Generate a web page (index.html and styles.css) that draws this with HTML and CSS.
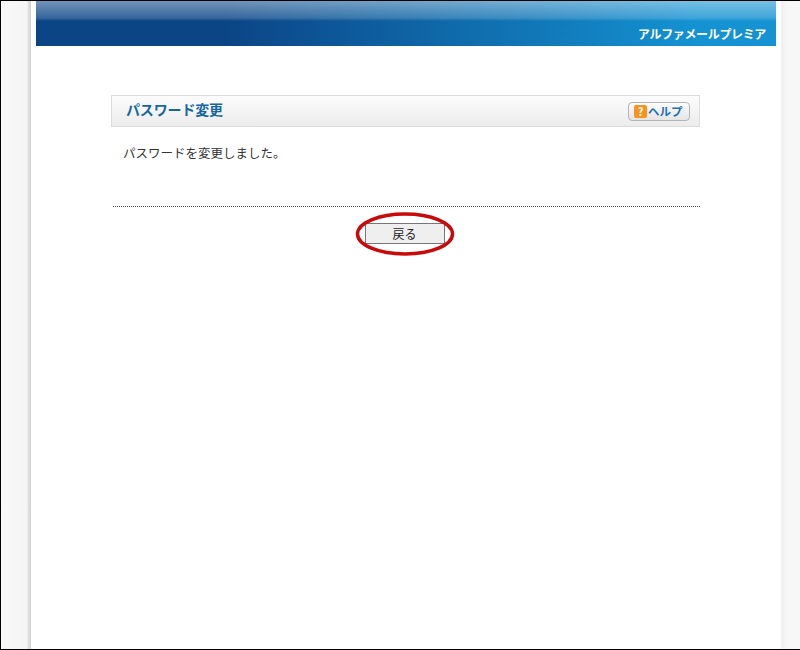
FILE: index.html
```html
<!DOCTYPE html>
<html lang="ja">
<head>
<meta charset="utf-8">
<title>パスワード変更</title>
<link rel="stylesheet" href="styles.css">
</head>
<body>
<div class="frame">
  <div class="gutter gutter-left"></div>
  <main class="page">
    <header class="banner">
      <span class="brand">アルファメールプレミア</span>
    </header>
    <section class="panel">
      <div class="title-bar">
        <h1 class="title">パスワード変更</h1>
        <a class="help">
          <svg class="help-icon" width="13" height="13" viewBox="0 0 13 13"><rect width="13" height="13" rx="2" fill="#f7931e"/></svg>
          <span class="help-q">?</span><span class="help-text">ヘルプ</span>
        </a>
      </div>
      <p class="message">パスワードを変更しました。</p>
      <div class="actions">
        <div class="button-wrap">
          <button class="back" type="button">戻る</button>
          <svg class="ring" width="100" height="44" viewBox="0 0 100 44"><ellipse cx="50" cy="22" rx="47.5" ry="20" fill="none" stroke="#c80a0a" stroke-width="3.5"/></svg>
        </div>
      </div>
    </section>
  </main>
  <div class="gutter gutter-right"></div>
</div>
</body>
</html>
```

FILE: styles.css
```css
* { box-sizing: border-box; }
html, body { margin: 0; padding: 0; background: #fff; }
body { font-family: "Noto Sans CJK JP", "Liberation Sans", sans-serif; overflow: hidden; }
.frame {
  width: 800px;
  height: 650px;
  border: 1px solid #000;
  border-right: 0;
  display: flex;
}
.gutter { background: #f6f6f6; flex: none; }
.gutter-left {
  width: 30px;
  background: linear-gradient(90deg, #f8f8f8 0, #f5f5f5 26px, #e4e4e4 27px, #cfcfcf 30px);
}
.gutter-right { width: 19px; background: linear-gradient(90deg, #f0f0f0, #f7f7f7 6px); }
.page { width: 750px; padding: 0 5px; background: #fff; flex: none; }
.banner {
  height: 45px;
  display: flex;
  align-items: flex-end;
  justify-content: flex-end;
  padding: 0 10px 4px 0;
  background:
    linear-gradient(180deg, rgba(255,255,255,.42) 0, rgba(255,255,255,.18) 17px, rgba(255,255,255,0) 20px),
    linear-gradient(90deg, #0b4586 0, #0b4586 190px, #1492d2 660px);
}
.brand { color: #fff; font-size: 12px; font-weight: 700; line-height: 16px; letter-spacing: -.35px; }
.panel { width: 589px; margin: 49px 0 0 75px; }
.title-bar {
  height: 32px;
  display: flex;
  align-items: center;
  justify-content: space-between;
  padding: 0 9px 0 14px;
  border: 1px solid #dcdcdc;
  background: linear-gradient(180deg, #fdfcfc, #ececec);
}
.title { margin: 0 0 4px; font-size: 14px; font-weight: 700; color: #14669f; line-height: 20px; letter-spacing: -.15px; }
.help {
  position: relative;
  width: 62px;
  height: 19px;
  display: flex;
  align-items: center;
  padding-left: 5px;
  border: 1px solid #b4b4b4;
  border-radius: 4px;
  background: linear-gradient(180deg, #fdfdfd, #e4e4e4);
}
.help-icon { flex: none; }
.help-q {
  position: absolute;
  left: 5px;
  width: 13px;
  text-align: center;
  color: #fff;
  font-size: 11px;
  font-weight: 700;
  line-height: 13px;
}
.help-text { margin-left: 1px; font-size: 11.5px; font-weight: 700; color: #1a6fb5; line-height: 16px; white-space: nowrap; }
.message {
  margin: 0 0 0 2px;
  padding: 17px 0 0 10px;
  height: 80px;
  border-bottom: 1px dotted #444;
  font-size: 12.5px;
  line-height: 18px;
  color: #333;
}
.actions { display: flex; justify-content: center; padding: 16px 2px 0 0; }
.button-wrap { position: relative; }
.back {
  display: block;
  width: 80px;
  height: 21px;
  padding: 0;
  border: 1px solid #777;
  border-radius: 0;
  background: #efefef;
  font: 12px/18px "Noto Sans CJK JP", "Liberation Sans", sans-serif;
  color: #222;
}
.ring { position: absolute; left: -10px; top: -11px; }
```
